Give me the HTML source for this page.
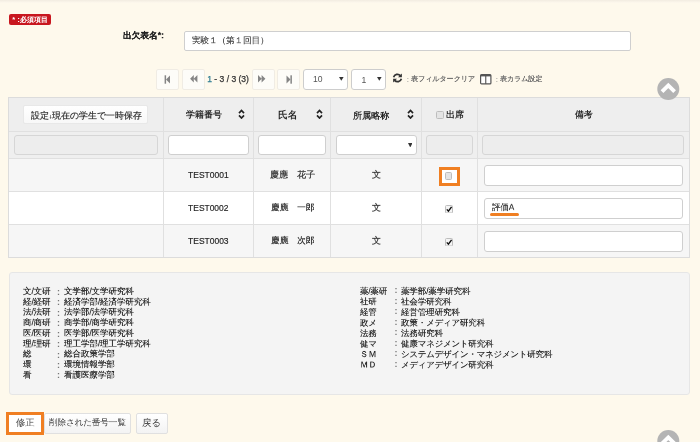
<!DOCTYPE html>
<html><head><meta charset="utf-8"><style>
*{box-sizing:border-box;margin:0;padding:0}
html,body{width:700px;height:442px;overflow:hidden;background:#fef9ec;font-family:"Liberation Sans",sans-serif;color:#333;line-height:1}
#root{position:absolute;left:0;top:0;width:700px;height:442px;will-change:transform;filter:blur(0.3px)}
.a{position:absolute}
.t{position:absolute;white-space:nowrap;transform-origin:0 0}
.pbtn{position:absolute;width:23px;height:20.4px;top:69.2px;background:#fdfcf8;border:1px solid #f0ece4;border-radius:2px}
.sel{position:absolute;top:69.2px;height:20.6px;background:#fff;border:1px solid #cdcdcd;border-radius:3px}
.tbl{position:absolute;left:8px;top:97px;width:682px;height:161px;border:1px solid #dcdcdc;background:#fff}
.row{position:absolute;left:0;width:680px}
.vl{position:absolute;width:1px;background:#e0e0e0;top:0;height:159px}
.hl{position:absolute;height:1px;background:#e0e0e0;left:0;width:680px}
.fin{position:absolute;background:#fff;border:1px solid #cfcfcf;border-radius:3px;height:20px;top:134.5px}
.fdis{position:absolute;background:#ededed;border:1px solid #d6d6d6;border-radius:3px;height:20px;top:134.5px}
.leg{position:absolute;left:9px;top:272px;width:680.5px;height:122.8px;background:#f4f4f4;border:1px solid #e6e6e6;border-radius:3px}
.btn{position:absolute;top:412.5px;height:21px;background:linear-gradient(#fff,#f3f3f3);border:1px solid #e0e0e0;border-radius:2px}
.cb{position:absolute;width:8px;height:8px;border:1px solid #bdbdbd;background:#e4e4e4;border-radius:1.5px}
</style></head><body><div id="root">
<div class="a" style="left:0;top:0;width:700px;height:2.5px;background:linear-gradient(#f2ece1,#fef9ee)"></div>
<div class="a" style="left:8.7px;top:14.1px;width:42.8px;height:10.6px;background:#c8171f;border-radius:2px"></div>
<div class="t" style="left:12.28px;top:16.0px;font-size:7.5px;font-weight:bold;color:#fff">*</div>
<div class="t" style="left:17.13px;top:16.13px;font-size:8.0px;font-weight:bold;color:#fff">:</div>
<div class="t" style="left:20.25px;top:15.82px;font-size:14.0px;color:#fff;-webkit-text-stroke:0.7px #fff;transform:scale(0.4964,0.4964);will-change:transform">必須項目</div>
<div class="t" style="left:123.06px;top:31.23px;font-weight:bold;font-size:18.0px;color:#222;-webkit-text-stroke:0.44px #222;transform:scale(0.4818,0.4818);will-change:transform">出欠表名*:</div>
<div class="a" style="left:184px;top:31px;width:447px;height:20.3px;background:#fff;border:1px solid #cfcfcf;border-radius:2px"></div>
<div class="t" style="left:191.5px;top:36.49px;font-size:18.0px;color:#555;-webkit-text-stroke:0.44px #555;transform:scale(0.473,0.473);will-change:transform">実験１（第１回目）</div>
<div class="pbtn" style="left:155.6px"></div>
<svg class="a" style="left:164px;top:74.5px" width="7" height="9" viewBox="0 0 7 9"><rect x="0.6" y="0.3" width="1.5" height="8.4" fill="#858585"/><path d="M2 4.5 L6 0.5 V8.5 Z" fill="#858585"/></svg>
<div class="pbtn" style="left:181.5px"></div>
<svg class="a" style="left:189.6px;top:75.2px" width="8" height="7.6" viewBox="0 0 8 7.6"><path d="M0.1 3.8 L3.8 0 V7.6 Z M3.7 3.8 L7.4 0 V7.6 Z" fill="#858585"/></svg>
<div class="t" style="left:207.15px;top:75.35px;font-size:8.551px;color:#333;-webkit-text-stroke:0.25px #333"><span style='color:#2f7d92;-webkit-text-stroke:0.25px #2f7d92'>1</span> - 3 / 3 (3)</div>
<div class="pbtn" style="left:251.5px"></div>
<svg class="a" style="left:258.3px;top:75.2px" width="8" height="7.6" viewBox="0 0 8 7.6"><path d="M0 0 L3.7 3.8 L0 7.6 Z M3.6 0 L7.4 3.8 L3.6 7.6 Z" fill="#858585"/></svg>
<div class="pbtn" style="left:276.5px"></div>
<svg class="a" style="left:285.5px;top:74.5px" width="7" height="9" viewBox="0 0 7 9"><path d="M0.5 0.5 L4.5 4.5 L0.5 8.5 Z" fill="#858585"/><rect x="4.4" y="0.3" width="1.5" height="8.4" fill="#858585"/></svg>
<div class="sel" style="left:303.2px;width:45px"></div>
<div class="t" style="left:312.99px;top:74.78px;font-size:8.6px;color:#555">10</div>
<svg class="a" style="left:339.2px;top:77.3px" width="4.6" height="3.8" viewBox="0 0 4.6 3.8"><path d="M0 0 H4.6 L2.3 3.8 Z" fill="#333"/></svg>
<div class="sel" style="left:351.4px;width:34.5px"></div>
<div class="t" style="left:361.41px;top:75.58px;font-size:8.6px;color:#555">1</div>
<svg class="a" style="left:377.3px;top:77.3px" width="4.6" height="3.8" viewBox="0 0 4.6 3.8"><path d="M0 0 H4.6 L2.3 3.8 Z" fill="#333"/></svg>
<svg class="a" style="left:391.8px;top:73.2px" width="11" height="10" viewBox="0 0 11 10"><path d="M1.6 4.2 A4 4 0 0 1 8.4 2.6" stroke="#333" stroke-width="1.7" fill="none"/><path d="M9.9 0.4 V4.3 H6 Z" fill="#333"/><path d="M9.4 5.8 A4 4 0 0 1 2.6 7.4" stroke="#333" stroke-width="1.7" fill="none"/><path d="M1.1 9.6 V5.7 H5 Z" fill="#333"/></svg>
<div class="t" style="left:406.74px;top:75.5px;font-size:8.0px;color:#777">:</div>
<div class="t" style="left:411.2px;top:75.47px;font-size:14.0px;color:#666;-webkit-text-stroke:0.44px #666;transform:scale(0.5083,0.5083);will-change:transform">表フィルタークリア</div>
<svg class="a" style="left:480px;top:74px" width="11.5" height="10.5" viewBox="0 0 11.5 10.5"><rect x="0.6" y="0.6" width="10.3" height="9.3" rx="1" fill="#fff" stroke="#555" stroke-width="1.2"/><rect x="0.6" y="0.6" width="10.3" height="1.8" fill="#555"/><rect x="5.2" y="0.6" width="1.1" height="9.3" fill="#555"/></svg>
<div class="t" style="left:495.78px;top:75.71px;font-size:8.0px;color:#777">:</div>
<div class="t" style="left:500.45px;top:75.33px;font-size:14.0px;color:#666;-webkit-text-stroke:0.44px #666;transform:scale(0.5035,0.5035);will-change:transform">表カラム設定</div>
<div class="tbl">
<div class="row" style="top:0;height:33px;background:#eeeeee"></div>
<div class="row" style="top:34px;height:26px;background:#efefef"></div>
<div class="row" style="top:61px;height:32px;background:#f6f6f6"></div>
<div class="row" style="top:94px;height:32px;background:#fff"></div>
<div class="row" style="top:127px;height:32px;background:#f6f6f6"></div>
<div class="hl" style="top:33px"></div>
<div class="hl" style="top:60px"></div>
<div class="hl" style="top:93px"></div>
<div class="hl" style="top:126px"></div>
<div class="vl" style="left:154px"></div>
<div class="vl" style="left:244px"></div>
<div class="vl" style="left:321px"></div>
<div class="vl" style="left:412px"></div>
<div class="vl" style="left:468px"></div>
</div>
<div class="a" style="left:23.2px;top:104.5px;width:125.3px;height:19.6px;background:linear-gradient(#fff,#f8f8f8);border:1px solid #e8e8e8;border-radius:2px"></div>
<div class="t" style="left:31.3px;top:110.6px;font-size:18.0px;color:#333;-webkit-text-stroke:0.44px #333;transform:scale(0.4995,0.4995);will-change:transform">設定<span style='font-size:12px'>↓</span>現在の学生で一時保存</div>
<div class="t" style="left:186.34px;top:109.84px;font-size:18.0px;color:#222;-webkit-text-stroke:0.55px #222;transform:scale(0.4994,0.4994);will-change:transform">学籍番号</div>
<div class="t" style="left:277.96px;top:109.5px;font-size:18.0px;color:#222;-webkit-text-stroke:0.55px #222;transform:scale(0.5378,0.5378);will-change:transform">氏名</div>
<div class="t" style="left:353.14px;top:110.58px;font-size:18.0px;color:#222;-webkit-text-stroke:0.55px #222;transform:scale(0.5043,0.5043);will-change:transform">所属略称</div>
<div class="t" style="left:445.7px;top:109.73px;font-size:18.0px;color:#222;-webkit-text-stroke:0.55px #222;transform:scale(0.4994,0.4994);will-change:transform">出席</div>
<div class="t" style="left:574.66px;top:110.18px;font-size:18.0px;color:#222;-webkit-text-stroke:0.55px #222;transform:scale(0.4896,0.4896);will-change:transform">備考</div>
<svg class="a" style="left:238.2px;top:109px" width="7" height="10" viewBox="0 0 7 10"><path d="M1 4.1 L3.5 1.5 L6 4.1 M1 6.4 L3.5 9 L6 6.4" stroke="#222" stroke-width="1.7" fill="none"/></svg>
<svg class="a" style="left:316.0px;top:109px" width="7" height="10" viewBox="0 0 7 10"><path d="M1 4.1 L3.5 1.5 L6 4.1 M1 6.4 L3.5 9 L6 6.4" stroke="#222" stroke-width="1.7" fill="none"/></svg>
<svg class="a" style="left:406.7px;top:109px" width="7" height="10" viewBox="0 0 7 10"><path d="M1 4.1 L3.5 1.5 L6 4.1 M1 6.4 L3.5 9 L6 6.4" stroke="#222" stroke-width="1.7" fill="none"/></svg>
<div class="cb" style="left:436px;top:111.3px"></div>
<div class="fdis" style="left:13.5px;width:144.5px"></div>
<div class="fin" style="left:168px;width:81px"></div>
<div class="fin" style="left:258px;width:67.5px"></div>
<div class="fin" style="left:335.5px;width:81px"></div>
<svg class="a" style="left:407.5px;top:142.5px" width="4.5" height="4.5" viewBox="0 0 4.5 4.5"><path d="M0 0 H4.5 L2.25 4.5 Z" fill="#333"/></svg>
<div class="fdis" style="left:426px;width:47px"></div>
<div class="fdis" style="left:482px;width:201.8px"></div>
<div class="t" style="left:188.1px;top:170.74px;font-size:8.497px;color:#222;-webkit-text-stroke:0.15px #222">TEST0001</div>
<div class="t" style="left:188.1px;top:203.74px;font-size:8.454px;color:#222;-webkit-text-stroke:0.15px #222">TEST0002</div>
<div class="t" style="left:188.1px;top:236.74px;font-size:8.483px;color:#222;-webkit-text-stroke:0.15px #222">TEST0003</div>
<div class="t" style="left:270.35px;top:170.07px;font-size:18.0px;color:#333;-webkit-text-stroke:0.44px #333;transform:scale(0.501,0.501);will-change:transform">慶應　花子</div>
<div class="t" style="left:270.87px;top:203.08px;font-size:18.0px;color:#333;-webkit-text-stroke:0.44px #333;transform:scale(0.4842,0.4842);will-change:transform">慶應　一郎</div>
<div class="t" style="left:270.87px;top:236.06px;font-size:18.0px;color:#333;-webkit-text-stroke:0.44px #333;transform:scale(0.4842,0.4842);will-change:transform">慶應　次郎</div>
<div class="t" style="left:371.85px;top:169.75px;font-size:18.0px;color:#333;-webkit-text-stroke:0.44px #333;transform:scale(0.5,0.5);will-change:transform">文</div>
<div class="t" style="left:371.85px;top:202.75px;font-size:18.0px;color:#333;-webkit-text-stroke:0.44px #333;transform:scale(0.5,0.5);will-change:transform">文</div>
<div class="t" style="left:371.85px;top:235.75px;font-size:18.0px;color:#333;-webkit-text-stroke:0.44px #333;transform:scale(0.5,0.5);will-change:transform">文</div>
<div class="a" style="left:439px;top:167px;width:21px;height:19px;border:3px solid #f07f22;background:#fff"></div>
<div class="cb" style="left:444.8px;top:172px;width:7.6px;height:7.6px"></div>
<div class="fin" style="left:483.5px;top:165px;width:199px;height:21px"></div>
<svg class="a" style="left:445px;top:204.5px" width="8" height="8.5" viewBox="0 0 8 8.5"><rect x="0.5" y="0.5" width="7" height="7.5" rx="1" fill="#f4f4f4" stroke="#bdbdbd"/><path d="M1.8 4.4 L3.4 6.2 L6.6 1.8" stroke="#111" stroke-width="1.4" fill="none"/></svg>
<div class="fin" style="left:483.5px;top:197.8px;width:199px;height:21px"></div>
<div class="t" style="left:491.65px;top:203.16px;font-size:18.0px;color:#444;-webkit-text-stroke:0.44px #444;transform:scale(0.4651,0.4651);will-change:transform">評価A</div>
<div class="a" style="left:490px;top:213.3px;width:29px;height:3px;border-radius:1.5px;background:#f07f22"></div>
<svg class="a" style="left:445px;top:237.5px" width="8" height="8.5" viewBox="0 0 8 8.5"><rect x="0.5" y="0.5" width="7" height="7.5" rx="1" fill="#f4f4f4" stroke="#bdbdbd"/><path d="M1.8 4.4 L3.4 6.2 L6.6 1.8" stroke="#111" stroke-width="1.4" fill="none"/></svg>
<div class="fin" style="left:483.5px;top:230.8px;width:199px;height:21px"></div>
<div class="leg"></div>
<div class="t" style="left:22.92px;top:286.0px;font-size:16.0px;color:#2a2a2a;-webkit-text-stroke:0.35px #2a2a2a;line-height:19.709px;transform:scale(0.5297,0.5297);will-change:transform">文/文研<br>経/経研<br>法/法研<br>商/商研<br>医/医研<br>理/理研<br>総<br>環<br>看</div>
<div class="t" style="left:57.1px;top:286.96px;font-size:9.0px;font-weight:bold;color:#777;;line-height:10.44px">:<br>:<br>:<br>:<br>:<br>:<br>:<br>:<br>:</div>
<div class="t" style="left:64.13px;top:285.97px;font-size:16.0px;color:#2a2a2a;-webkit-text-stroke:0.35px #2a2a2a;line-height:19.724px;transform:scale(0.5293,0.5293);will-change:transform">文学部/文学研究科<br>経済学部/経済学研究科<br>法学部/法学研究科<br>商学部/商学研究科<br>医学部/医学研究科<br>理工学部/理工学研究科<br>総合政策学部<br>環境情報学部<br>看護医療学部</div>
<div class="t" style="left:359.67px;top:285.76px;font-size:16.0px;color:#2a2a2a;-webkit-text-stroke:0.35px #2a2a2a;line-height:20.184px;transform:scale(0.5217,0.5217);will-change:transform">薬/薬研<br>社研<br>経管<br>政メ<br>法務<br>健マ<br>ＳＭ<br>ＭＤ</div>
<div class="t" style="left:394.53px;top:285.03px;font-size:9.0px;font-weight:bold;color:#777;;line-height:10.53px">:<br>:<br>:<br>:<br>:<br>:<br>:<br>:</div>
<div class="t" style="left:400.81px;top:285.7px;font-size:16.0px;color:#2a2a2a;-webkit-text-stroke:0.35px #2a2a2a;line-height:20.023px;transform:scale(0.5259,0.5259);will-change:transform">薬学部/薬学研究科<br>社会学研究科<br>経営管理研究科<br>政策・メディア研究科<br>法務研究科<br>健康マネジメント研究科<br>システムデザイン・マネジメント研究科<br>メディアデザイン研究科</div>
<div class="a" style="left:5.8px;top:412px;width:38px;height:22.6px;border:3.2px solid #f07f22;background:#fff"></div>
<div class="t" style="left:15.92px;top:418.02px;font-size:18.0px;color:#555;-webkit-text-stroke:0.2px #555;transform:scale(0.5138,0.5138);will-change:transform">修正</div>
<div class="btn" style="left:43.8px;width:87.5px"></div>
<div class="t" style="left:48.52px;top:418.46px;font-size:18.0px;color:#555;-webkit-text-stroke:0.2px #555;transform:scale(0.475,0.475);will-change:transform">削除された番号一覧</div>
<div class="btn" style="left:135.9px;width:31.8px"></div>
<div class="t" style="left:141.96px;top:417.75px;font-size:18.0px;color:#555;-webkit-text-stroke:0.2px #555;transform:scale(0.5235,0.5235);will-change:transform">戻る</div>
<svg class="a" style="left:657px;top:78px" width="23" height="23" viewBox="0 0 23 23"><circle cx="11.3" cy="11" r="11" fill="#b4b4b4"/><path d="M5 13.6 L11.3 7.4 L17.6 13.6" stroke="#fff" stroke-width="3.9" fill="none"/></svg>
<svg class="a" style="left:657px;top:430px" width="23" height="23" viewBox="0 0 23 23"><circle cx="11.3" cy="11" r="11" fill="#b4b4b4"/><path d="M5 13.6 L11.3 7.4 L17.6 13.6" stroke="#fff" stroke-width="3.9" fill="none"/></svg>
</div></body></html>
